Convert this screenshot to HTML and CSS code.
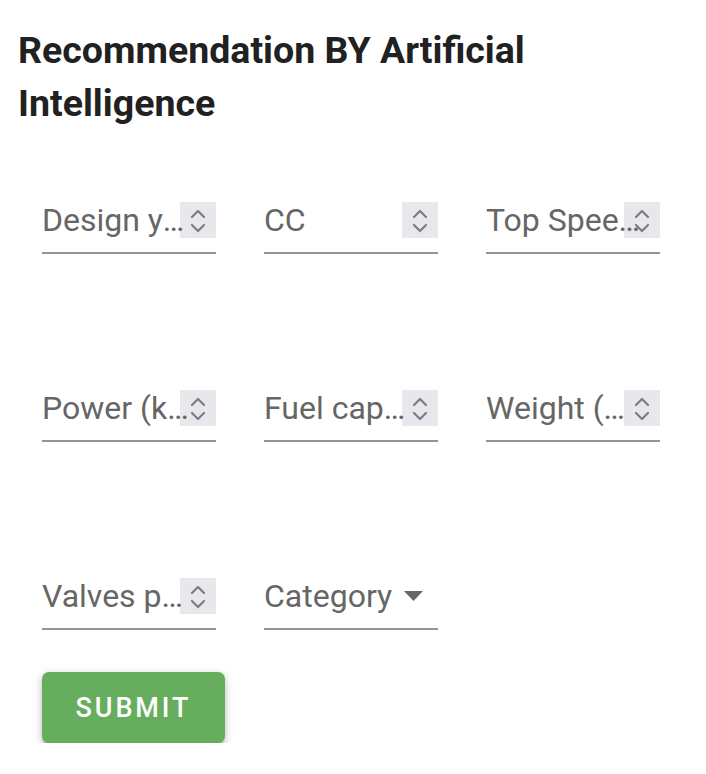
FILE: index.html
```html
<!DOCTYPE html>
<html>
<head>
<meta charset="utf-8">
<link rel="stylesheet" href="styles.css">
</head>
<body>
<div class="page">
  <h1 class="title">Recommendation BY Artificial Intelligence</h1>
  <form class="form">
    <div class="grid">
      <div class="field"><span class="ph">Design year</span><span class="spin"><svg width="36" height="36" viewBox="0 0 36 36"><path d="M12 15 L18 9 L24 15" /><path d="M12 23 L18 29 L24 23" /></svg></span></div>
      <div class="field"><span class="ph">CC</span><span class="spin"><svg width="36" height="36" viewBox="0 0 36 36"><path d="M12 15 L18 9 L24 15" /><path d="M12 23 L18 29 L24 23" /></svg></span></div>
      <div class="field"><span class="ph ph-wide">Top Speed (km/h)</span><span class="spin"><svg width="36" height="36" viewBox="0 0 36 36"><path d="M12 15 L18 9 L24 15" /><path d="M12 23 L18 29 L24 23" /></svg></span></div>
      <div class="field"><span class="ph">Power (kW)</span><span class="spin"><svg width="36" height="36" viewBox="0 0 36 36"><path d="M12 15 L18 9 L24 15" /><path d="M12 23 L18 29 L24 23" /></svg></span></div>
      <div class="field"><span class="ph">Fuel capacity</span><span class="spin"><svg width="36" height="36" viewBox="0 0 36 36"><path d="M12 15 L18 9 L24 15" /><path d="M12 23 L18 29 L24 23" /></svg></span></div>
      <div class="field"><span class="ph">Weight (kg)</span><span class="spin"><svg width="36" height="36" viewBox="0 0 36 36"><path d="M12 15 L18 9 L24 15" /><path d="M12 23 L18 29 L24 23" /></svg></span></div>
      <div class="field"><span class="ph">Valves per cylinder</span><span class="spin"><svg width="36" height="36" viewBox="0 0 36 36"><path d="M12 15 L18 9 L24 15" /><path d="M12 23 L18 29 L24 23" /></svg></span></div>
      <div class="field select"><span class="ph">Category</span><span class="caret"><svg width="19" height="10" viewBox="0 0 19 10"><polygon points="0,0 19,0 9.5,10" /></svg></span></div>
    </div>
    <button type="button" class="submit">SUBMIT</button>
  </form>
</div>
</body>
</html>
```

FILE: styles.css
```css
html, body {
  margin: 0;
  padding: 0;
  background: #ffffff;
}

.page {
  padding: 24px 0 0 18px;
  font-family: Roboto, "Liberation Sans", sans-serif;
}

.title {
  margin: 0;
  width: 600px;
  font-size: 37.5px;
  font-weight: 700;
  line-height: 53px;
  color: #212121;
}

.form {
  padding: 72px 0 0 24px;
}

.grid {
  display: grid;
  grid-template-columns: 174px 174px 174px;
  column-gap: 48px;
  row-gap: 136px;
}

.field {
  position: relative;
  height: 50px;
  border-bottom: 2px solid #949494;
}

.ph {
  position: relative;
  z-index: 1;
  display: block;
  padding-right: 22px;
  font-size: 32px;
  line-height: 37px;
  color: #666666;
  white-space: nowrap;
  overflow: hidden;
  text-overflow: ellipsis;
}

.ph-wide {
  padding-right: 8px;
}

.select .ph {
  padding-right: 40px;
}

.spin {
  position: absolute;
  z-index: 0;
  top: 0;
  right: 0;
  width: 36px;
  height: 36px;
  background: #e8e7ec;
  display: flex;
}

.spin svg path {
  fill: none;
  stroke: #7d7b85;
  stroke-width: 2.2;
  stroke-linecap: round;
  stroke-linejoin: round;
}

.caret {
  position: absolute;
  top: 13px;
  right: 15px;
  width: 19px;
  height: 10px;
  display: flex;
}

.caret svg polygon {
  fill: #666666;
}

.submit {
  display: block;
  margin-top: 42px;
  width: 183px;
  height: 71px;
  border: none;
  border-radius: 7px;
  background: #66ae5d;
  color: #ffffff;
  font-family: Roboto, "Liberation Sans", sans-serif;
  font-size: 27px;
  font-weight: 500;
  letter-spacing: 2.9px;
  box-shadow: 0 5px 3px -2px rgba(0,0,0,0.25), 0 3px 6px 0 rgba(0,0,0,0.16), 0 2px 12px 0 rgba(0,0,0,0.12);
  padding: 0;
}
```
